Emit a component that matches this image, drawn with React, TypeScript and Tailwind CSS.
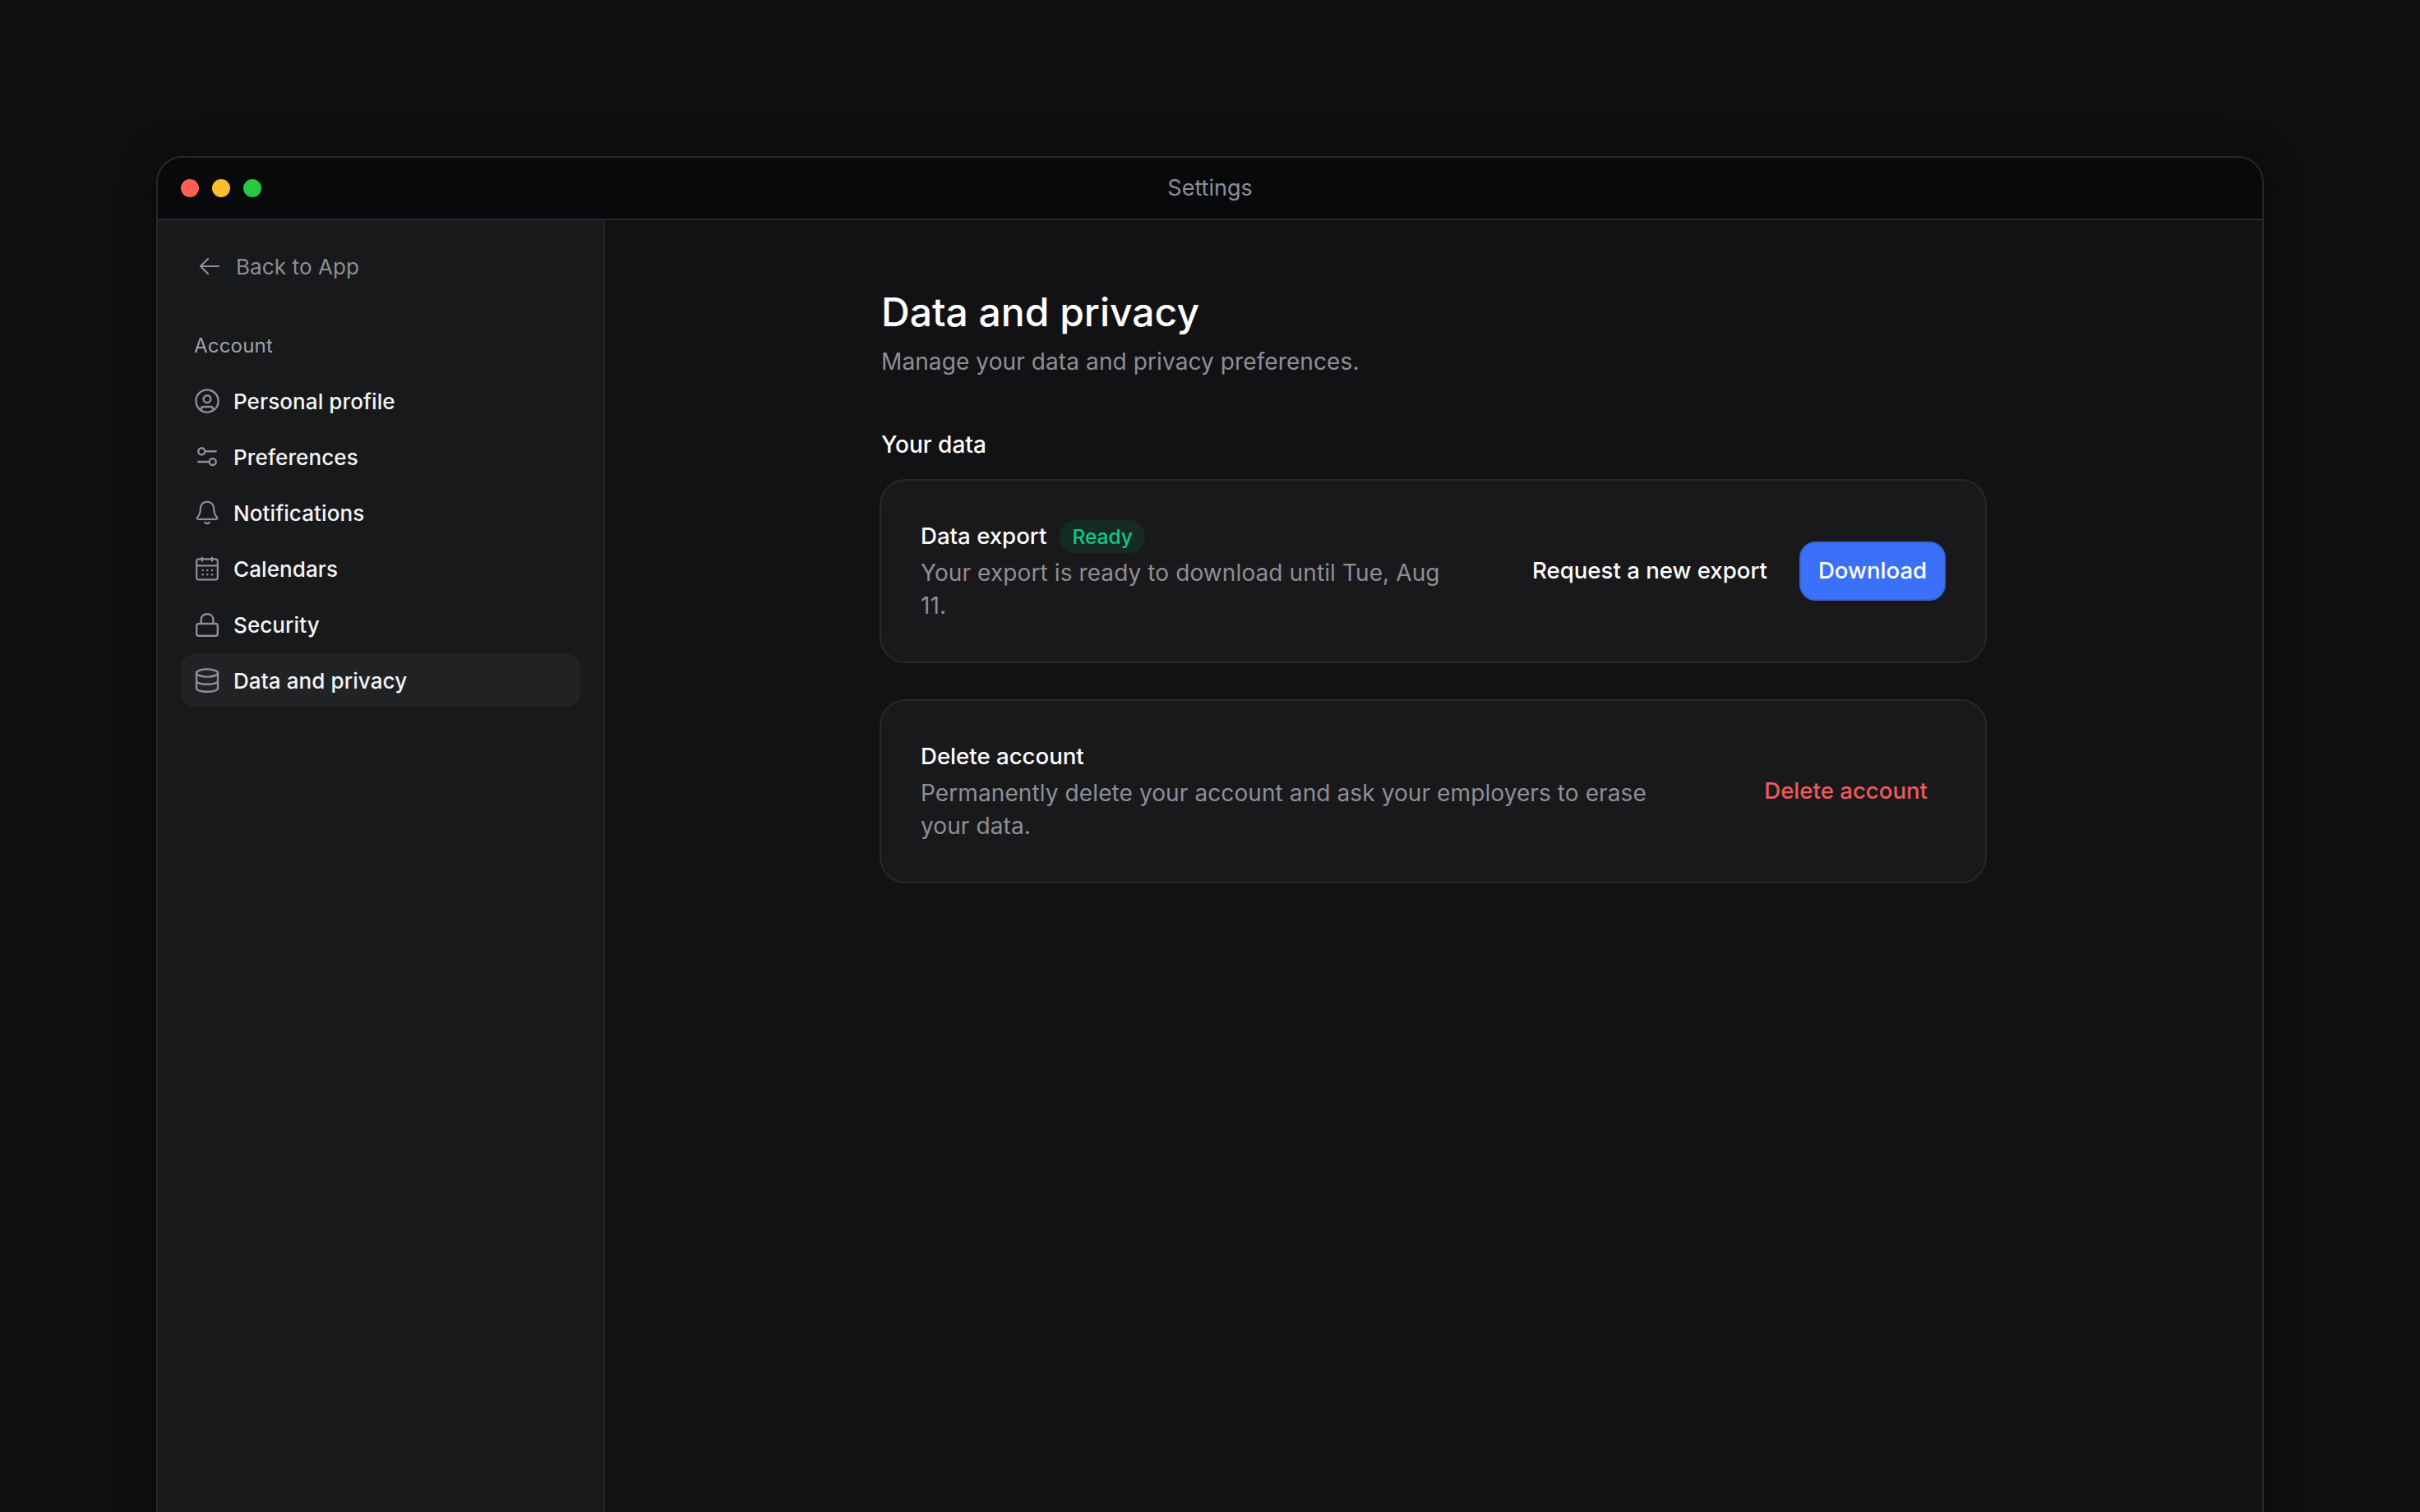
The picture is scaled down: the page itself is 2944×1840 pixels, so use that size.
import React from 'react'

const iconClass = 'w-8 h-8 shrink-0 text-[#8e8e97]'

function ProfileIcon(): React.ReactElement {
  return (
    <svg viewBox="0 0 32 32" fill="none" stroke="currentColor" strokeWidth="2.4" className={iconClass}>
      <circle cx="16" cy="16" r="13.6" />
      <circle cx="16" cy="13.6" r="4.4" />
      <path d="M8.8 26.6V26c0-1.8 1.4-3 3-3h8.4c1.6 0 3 1.2 3 3v.6" />
    </svg>
  )
}

function SlidersIcon(): React.ReactElement {
  return (
    <svg viewBox="0 0 32 32" fill="none" stroke="currentColor" strokeWidth="2.4" strokeLinecap="round" className={iconClass}>
      <circle cx="9.3" cy="9.2" r="4" />
      <path d="M13.3 9.2h13.4" />
      <circle cx="22.7" cy="22" r="4" />
      <path d="M18.7 22H5.4" />
    </svg>
  )
}

function BellIcon(): React.ReactElement {
  return (
    <svg viewBox="0 0 32 32" fill="none" stroke="currentColor" strokeWidth="2.2" strokeLinecap="round" strokeLinejoin="round" className={iconClass}>
      <path d="M16 2.6c-5 0-8.2 3.8-8.2 8.6 0 4.6-1 7.4-3.6 10-1 1-.4 2.6 1 2.6h21.6c1.4 0 2-1.6 1-2.6-2.6-2.6-3.6-5.4-3.6-10 0-4.8-3.2-8.6-8.2-8.6Z" />
      <path d="M13.4 27.6c.6 1 1.6 1.6 2.6 1.6s2-.6 2.6-1.6" />
    </svg>
  )
}

function CalendarIcon(): React.ReactElement {
  return (
    <svg viewBox="0 0 32 32" fill="none" stroke="currentColor" strokeWidth="2.2" strokeLinecap="round" className={iconClass}>
      <rect x="3.2" y="4.4" width="25.6" height="25" rx="2.6" />
      <path d="M3.2 12.4h25.6M10 2.6v4.2M22 2.6v4.2" />
      <g fill="currentColor" stroke="none">
        <circle cx="10.6" cy="18" r="1.25" />
        <circle cx="16.2" cy="18" r="1.25" />
        <circle cx="22" cy="18" r="1.25" />
        <circle cx="10.6" cy="23.2" r="1.25" />
        <circle cx="16.2" cy="23.2" r="1.25" />
        <circle cx="22" cy="23.2" r="1.25" />
      </g>
    </svg>
  )
}

function LockIcon(): React.ReactElement {
  return (
    <svg viewBox="0 0 32 32" fill="none" stroke="currentColor" strokeWidth="2.4" strokeLinejoin="round" className={iconClass}>
      <rect x="3.2" y="15" width="25.6" height="14.8" rx="2.6" />
      <path d="M8.6 15v-4.6C8.6 6 11.8 3.2 16 3.2s7.4 2.8 7.4 7.2V15" />
    </svg>
  )
}

function DatabaseIcon(): React.ReactElement {
  return (
    <svg viewBox="0 0 32 32" fill="none" stroke="currentColor" strokeWidth="2.4" className={iconClass}>
      <ellipse cx="16" cy="7" rx="13" ry="4.6" />
      <path d="M3 7v18.4c0 2.6 5.8 4.4 13 4.4s13-1.8 13-4.4V7" />
      <path d="M3 16.4c0 2.6 5.8 4.4 13 4.4s13-1.8 13-4.4" />
    </svg>
  )
}

const navItems = [
  { label: 'Personal profile', icon: <ProfileIcon /> },
  { label: 'Preferences', icon: <SlidersIcon /> },
  { label: 'Notifications', icon: <BellIcon /> },
  { label: 'Calendars', icon: <CalendarIcon /> },
  { label: 'Security', icon: <LockIcon /> },
  { label: 'Data and privacy', icon: <DatabaseIcon />, active: true }
]

function Sidebar(): React.ReactElement {
  return (
    <aside className="w-[544px] shrink-0 bg-[#18191b] border-r-2 border-[#222326] px-7 pt-[32px]">
      <div className="flex items-center gap-4 h-12 pl-[19px] text-[26px] tracking-[0.1px] text-[#8e8e97]">
        <svg viewBox="0 0 32 32" fill="none" stroke="currentColor" strokeWidth="2.2" strokeLinecap="round" strokeLinejoin="round" className="w-8 h-8">
          <path d="M27 16H5M14 7l-9 9 9 9" />
        </svg>
        <span>Back to App</span>
      </div>
      <div className="mt-[50px] pl-4 h-[46px] flex items-center text-[24px] tracking-[0.2px] text-[#a0a0a8]">Account</div>
      <nav className="mt-[12px] flex flex-col gap-1">
        {navItems.map((item) => (
          <div
            key={item.label}
            className={`flex items-center gap-[16px] h-16 pl-4 rounded-2xl text-[26px] tracking-[0.1px] font-medium text-[#f4f4f5] ${item.active ? 'bg-[#212224]' : ''}`}
          >
            {item.icon}
            <span>{item.label}</span>
          </div>
        ))}
      </nav>
    </aside>
  )
}

function Card({ children }: { children: React.ReactNode }): React.ReactElement {
  return (
    <div className="h-[224px] flex items-center justify-between bg-[#19191b] border-2 border-[#27282b] rounded-[32px] pl-[48px] pr-[48px]">
      {children}
    </div>
  )
}

export default function App(): React.ReactElement {
  return (
    <div className="h-[1840px] overflow-hidden bg-[#0f1012] pt-[190px] px-[190px]" style={{ fontFamily: 'Inter, sans-serif' }}>
      <div className="h-[1700px] flex flex-col rounded-t-[32px] border-2 border-[#27282b] overflow-hidden shadow-[0_0_40px_rgba(0,0,0,0.5)]">
        <header className="relative h-[76px] shrink-0 bg-[#08090b] border-b-2 border-[#27282b] flex items-center justify-center">
          <div className="absolute left-[28px] top-[26px] flex gap-4">
            <span className="w-[22px] h-[22px] rounded-full bg-[#ff5f57]" />
            <span className="w-[22px] h-[22px] rounded-full bg-[#febc2e]" />
            <span className="w-[22px] h-[22px] rounded-full bg-[#28c840]" />
          </div>
          <span className="text-[27px] text-[#8e8e97]">Settings</span>
        </header>
        <div className="flex-1 flex">
          <Sidebar />
          <main className="flex-1 bg-[#121214] pl-[334px] pt-[80px]">
            <div className="w-[1347px]">
              <div className="pl-[2px]">
                <h1 className="text-[48px] leading-[64px] font-medium text-white">Data and privacy</h1>
                <p className="mt-2 text-[28px] tracking-[0.1px] leading-[40px] text-[#8e8e97]">Manage your data and privacy preferences.</p>
                <h2 className="mt-[61px] text-[28px] leading-[40px] font-medium text-white">Your data</h2>
              </div>
              <div className="mt-[22px] flex flex-col gap-[44px]">
                <Card>
                  <div className="w-[660px]">
                    <div className="flex items-center gap-4 h-10">
                      <span className="text-[27.6px] font-medium text-white">Data export</span>
                      <span className="h-10 px-[15px] flex items-center rounded-full bg-[#162a25] text-[24.5px] font-medium text-[#0fc98c]">Ready</span>
                    </div>
                    <p className="mt-1 text-[28px] tracking-[0.1px] leading-[40px] text-[#8e8e97]">Your export is ready to download until Tue, Aug 11.</p>
                  </div>
                  <div className="flex items-center gap-[39px]">
                    <span className="text-[27.6px] font-medium text-white">Request a new export</span>
                    <button className="h-[72px] w-[178px] rounded-[20px] bg-[#3b71f8] border-2 border-[#3564d8] text-[27.6px] font-medium text-white">Download</button>
                  </div>
                </Card>
                <Card>
                  <div className="w-[900px]">
                    <div className="h-10 flex items-center text-[27.6px] font-medium text-white">Delete account</div>
                    <p className="mt-1 text-[28px] tracking-[0.1px] leading-[40px] text-[#8e8e97]">Permanently delete your account and ask your employers to erase your data.</p>
                  </div>
                  <span className="pr-[22px] text-[27.6px] font-medium text-[#ee5a5e]">Delete account</span>
                </Card>
              </div>
            </div>
          </main>
        </div>
      </div>
    </div>
  )
}
